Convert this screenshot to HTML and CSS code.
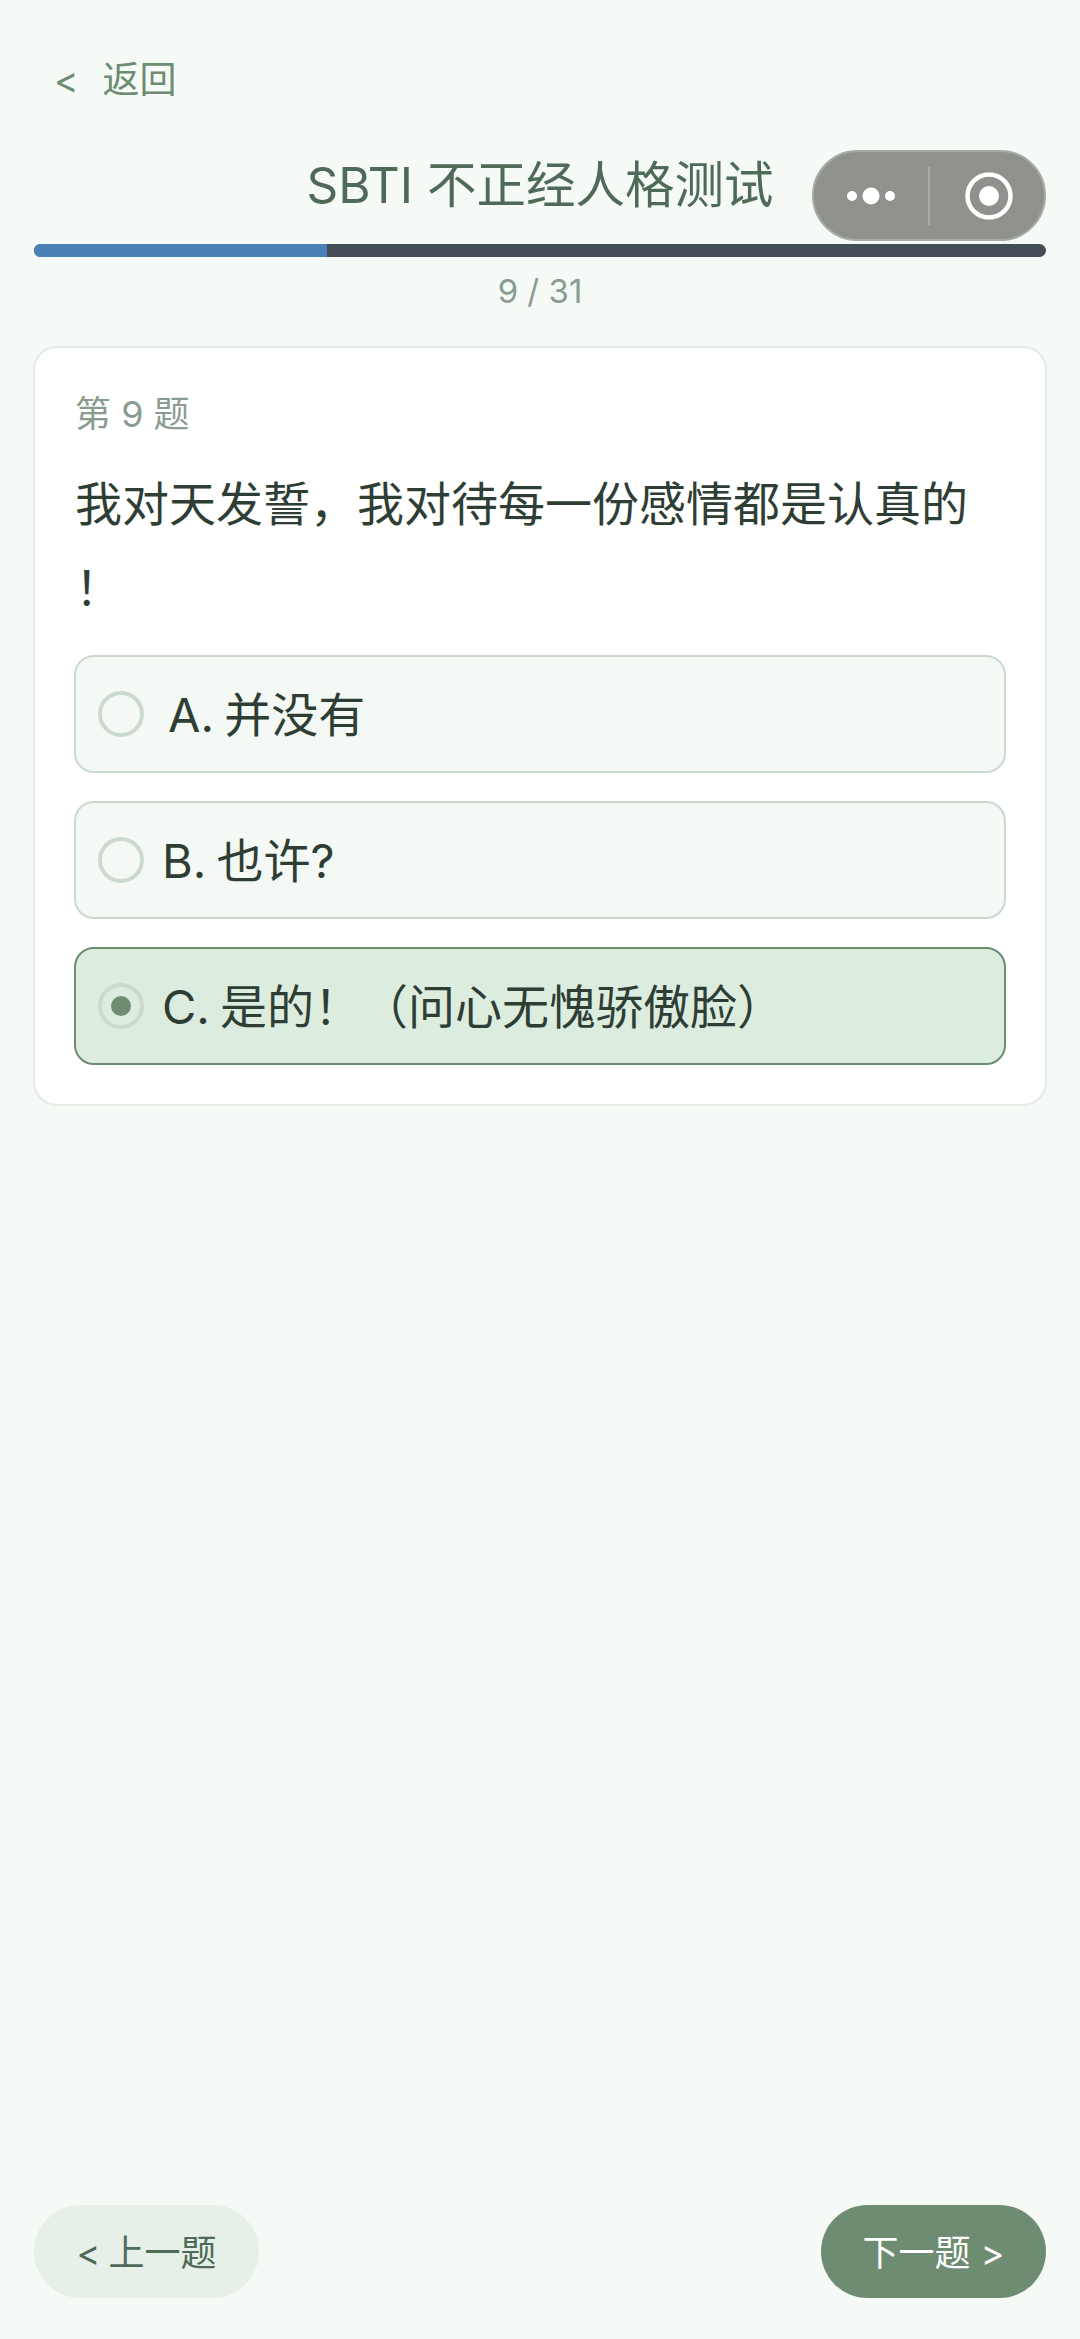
FILE: index.html
```html
<!DOCTYPE html>
<html lang="zh-CN">
<head>
    <meta charset="UTF-8">
    <meta name="viewport" content="width=device-width, initial-scale=1.0">
    <title>SBTI 不正经人格测试</title>
    <link rel="stylesheet" href="styles.css">
</head>
<body>
    <div class="capsule">
        <svg class="capsule-more" width="60" height="20" viewBox="0 0 60 20">
            <circle cx="11" cy="10" r="5" fill="#fff"/>
            <circle cx="30" cy="10" r="8.5" fill="#fff"/>
            <circle cx="49" cy="10" r="5" fill="#fff"/>
        </svg>
        <span class="capsule-line"></span>
        <svg class="capsule-target" width="50" height="50" viewBox="0 0 50 50">
            <circle cx="25" cy="25" r="21.5" fill="none" stroke="#fff" stroke-width="4.5"/>
            <circle cx="25" cy="25" r="10" fill="#fff"/>
        </svg>
    </div>

    <div class="back"><span class="back-arrow">&lt;</span>返回</div>
    <h1 class="title">SBTI 不正经人格测试</h1>

    <div class="progress"><div class="progress-fill"></div></div>
    <div class="count">9 / 31</div>

    <div class="card">
        <div class="label">第 9 题</div>
        <div class="question">我对天发誓，我对待每一份感情都是认真的<br>！</div>

        <div class="option option-a">
            <span class="radio"></span>
            <span class="option-text">A. 并没有</span>
        </div>
        <div class="option">
            <span class="radio"></span>
            <span class="option-text">B. 也许?</span>
        </div>
        <div class="option selected">
            <span class="radio"></span>
            <span class="option-text">C. 是的！（问心无愧骄傲脸）</span>
        </div>
    </div>

    <div class="footer">
        <button class="btn btn-prev">&lt; 上一题</button>
        <button class="btn btn-next">下一题 &gt;</button>
    </div>
</body>
</html>
```

FILE: styles.css
```css
* {
    box-sizing: border-box;
}
body {
    margin: 0;
    height: 2339px;
    padding: 0 34px 41px 34px;
    display: flex;
    flex-direction: column;
    background-color: #f5faf6;
    font-family: Inter, "Noto Sans CJK SC", sans-serif;
    color: #2f3e34;
}
.back {
    margin-top: 54px;
    height: 52px;
    line-height: 52px;
    padding-left: 20px;
    font-size: 37px;
    color: #6d8c72;
}
.back-arrow {
    margin-right: 24px;
}
.title {
    margin: 44px 0 0 0;
    height: 70px;
    line-height: 70px;
    text-align: center;
    font-size: 49.5px;
    font-weight: normal;
    color: #4f6b57;
}
.capsule {
    position: absolute;
    left: 812px;
    top: 150px;
    width: 234px;
    height: 91px;
    display: flex;
    align-items: center;
    background: #8f918d;
    border: 2px solid #a6a9a4;
    border-radius: 46px;
}
.capsule-more {
    margin-left: 27px;
}
.capsule-line {
    width: 2px;
    height: 58px;
    margin-left: 27px;
    background: #a9aca7;
}
.capsule-target {
    margin-left: 34px;
}
.progress {
    margin-top: 24px;
    height: 13px;
    border-radius: 7px;
    background: #444c56;
    overflow: hidden;
}
.progress-fill {
    width: 29%;
    height: 100%;
    background: #4a80b5;
}
.count {
    margin-top: 12px;
    height: 44px;
    line-height: 44px;
    text-align: center;
    font-size: 33px;
    color: #8a9c90;
}
.card {
    margin: 33px -1px 0 -1px;
    height: 760px;
    padding: 39px 40px 0 40px;
    background: #fff;
    border: 2px solid #e3ebe5;
    border-radius: 24px;
}
.label {
    height: 54px;
    line-height: 54px;
    font-size: 36px;
    color: #8a9c90;
}
.question {
    margin-top: 21px;
    line-height: 84px;
    font-size: 47px;
    color: #2f3e34;
}
.option {
    display: flex;
    align-items: center;
    height: 118px;
    margin: 28px -1px 0 -1px;
    padding-left: 22px;
    background: #f4f9f5;
    border: 2px solid #cbd9cf;
    border-radius: 20px;
    font-size: 47px;
}
.question + .option {
    margin-top: 25px;
}
.option-text {
    padding-bottom: 6px;
    word-spacing: -3px;
}
.radio {
    flex: none;
    width: 46px;
    height: 46px;
    margin-right: 18px;
    border: 4px solid #cbd9cf;
    border-radius: 50%;
    display: flex;
    align-items: center;
    justify-content: center;
}
.option-a .radio {
    margin-right: 24px;
}
.selected {
    background: #dcede0;
    border-color: #6d8c72;
}
.selected .radio::after {
    content: "";
    width: 20px;
    height: 20px;
    border-radius: 50%;
    background: #6d8c72;
}
.footer {
    margin-top: auto;
    display: flex;
    justify-content: space-between;
}
.btn {
    width: 225px;
    height: 93px;
    padding: 0 0 4px 0;
    border: none;
    border-radius: 47px;
    font-family: inherit;
    font-size: 36px;
}
.btn-prev {
    background: #e6f0e8;
    color: #4f6b57;
    word-spacing: -2px;
}
.btn-next {
    background: #6d8c72;
    color: #fff;
}
```
